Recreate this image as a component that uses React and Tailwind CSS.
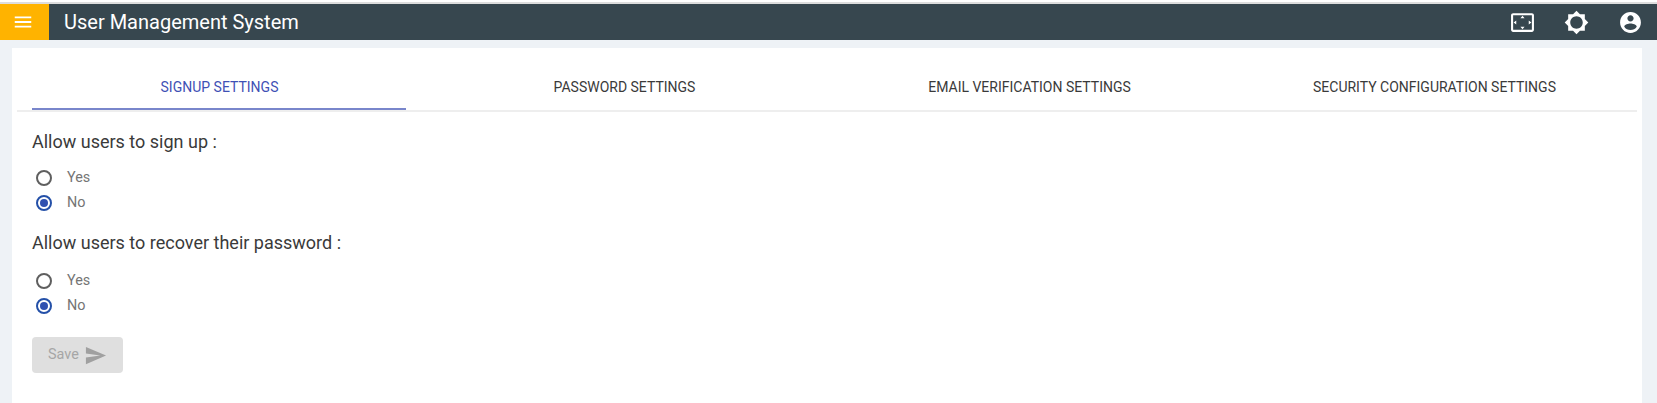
import React, { useState } from "react";

const tabs = [
  "SIGNUP SETTINGS",
  "PASSWORD SETTINGS",
  "EMAIL VERIFICATION SETTINGS",
  "SECURITY CONFIGURATION SETTINGS",
];

function Icon({ d, size = 24, className = "" }) {
  return (
    <svg width={size} height={size} viewBox="0 0 24 24" fill="currentColor" className={className}>
      <path d={d} />
    </svg>
  );
}

function Radio({ label, checked }) {
  return (
    <label className="flex items-center h-[25px] pl-1">
      <span
        className={`w-4 h-4 rounded-full border-2 flex items-center justify-center ${
          checked ? "border-[#2450a8]" : "border-[#5f5f5f]"
        }`}
      >
        {checked && <span className="w-2 h-2 rounded-full bg-[#2f50b0]"></span>}
      </span>
      <span className="ml-[15px] text-[14.4px] text-[#757575]">{label}</span>
    </label>
  );
}

function Question({ title, titleClass = "mb-[11px]" }) {
  return (
    <div>
      <h3 className={`text-[18px] leading-[24px] text-[#3a3a3a] font-normal ${titleClass}`}>{title}</h3>
      <Radio label="Yes" />
      <Radio label="No" checked />
    </div>
  );
}

export default function App() {
  const [activeTab, setActiveTab] = useState(0);

  return (
    <div className="h-[403px] overflow-hidden bg-[#eef2f6] font-['Roboto',sans-serif]">
      <div className="h-[4px] bg-white border-b-2 border-[#dddddd]"></div>
      <header className="h-9 bg-[#37474f] flex items-center text-white">
        <button className="w-[49px] h-full bg-[#ffb300] flex items-center justify-center pr-[3px]">
          <Icon size={22} d="M3 18h18v-2H3v2zm0-5h18v-2H3v2zm0-7v2h18V6H3z" />
        </button>
        <div className="ml-[15px] text-[20px] font-normal">User Management System</div>
        <div className="ml-auto flex items-center pr-[14px] gap-[29px]">
          <Icon
            size={25}
            d="M12.01 5.5L10 8h4l-1.99-2.5zM18 10v4l2.5-1.99L18 10zM6 10l-2.5 2.01L6 14v-4zm8 6h-4l2.01 2.5L14 16zm7-13H3c-1.1 0-2 .9-2 2v14c0 1.1.9 2 2 2h18c1.1 0 2-.9 2-2V5c0-1.1-.9-2-2-2zm0 16.01H3V4.99h18v14.02z"
          />
          <Icon
            size={25}
            d="M20 15.31L23.31 12 20 8.69V4h-4.69L12 .69 8.69 4H4v4.69L.69 12 4 15.31V20h4.69L12 23.31 15.31 20H20v-4.69zM12 18c-3.31 0-6-2.69-6-6s2.69-6 6-6 6 2.69 6 6-2.69 6-6 6z"
          />
          <Icon
            size={25}
            d="M12 2C6.48 2 2 6.48 2 12s4.48 10 10 10 10-4.48 10-10S17.52 2 12 2zm0 3c1.66 0 3 1.34 3 3s-1.34 3-3 3-3-1.34-3-3 1.34-3 3-3zm0 14.2c-2.5 0-4.71-1.28-6-3.22.03-1.99 4-3.08 6-3.08 1.99 0 5.97 1.09 6 3.08-1.29 1.94-3.5 3.22-6 3.22z"
          />
        </div>
      </header>

      <main className="mt-2 ml-3 mr-[15px] h-[400px] bg-white px-[5px]">
        <div className="grid grid-cols-4 border-b-2 border-[#eeeeee] h-[64px]">
          {tabs.map((tab, index) => (
            <button
              key={tab}
              onClick={() => setActiveTab(index)}
              className={`relative text-[14px] pt-[17px] ${
                activeTab === index ? "text-[#3f51b5]" : "text-[#3a3a3a]"
              }`}
            >
              {tab}
              {activeTab === index && (
                <span className="absolute left-[15px] right-[16px] bottom-0 h-[2px] bg-[#7986cb]"></span>
              )}
            </button>
          ))}
        </div>

        <div className="px-[15px] pt-[18px]">
          <Question title="Allow users to sign up :" />
          <div className="mt-[16px]">
            <Question title="Allow users to recover their password :" titleClass="mb-[13px]" />
          </div>
          <button
            disabled
            className="mt-[19px] w-[91px] h-9 rounded-[4px] bg-[#dfdfdf] text-[#a6a6a6] text-[14.4px] flex items-center pl-4"
          >
            Save
            <Icon size={23} className="ml-[5px] text-[#a0a0a0]" d="M2.01 21L23 12 2.01 3 2 10l15 2-15 2z" />
          </button>
        </div>
      </main>
    </div>
  );
}
